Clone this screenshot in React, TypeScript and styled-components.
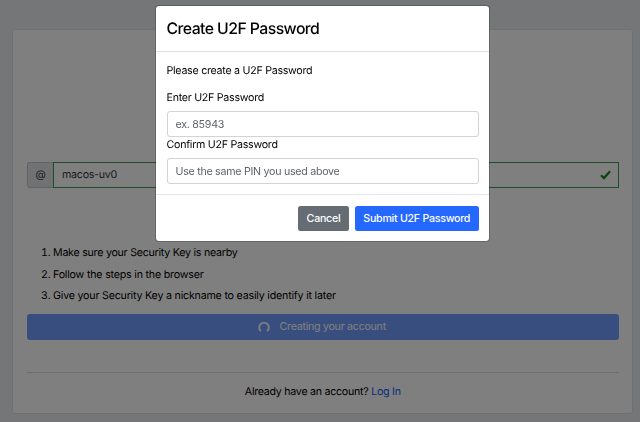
import React from 'react';
import styled, { createGlobalStyle } from 'styled-components';

const GlobalStyle = createGlobalStyle`
  * { box-sizing: border-box; }
  body {
    margin: 0;
    overflow: hidden;
    background: #e9ecef;
    color: #000;
    font: 400 10.67px/16px Inter, "Liberation Sans", sans-serif;
    letter-spacing: -0.27px;
    text-rendering: geometricPrecision;
  }
  input, button { font: inherit; letter-spacing: inherit; }
`;

const Page = styled.main`
  height: 422px;
  padding: 29px 7px 8px 12px;
`;

const Card = styled.section`
  display: flex;
  flex-direction: column;
  height: 385px;
  padding: 132px 13.5px 0 14px;
  background: #fff;
  border: 1px solid #dfe1e4;
  border-radius: 3px;
`;

const InputGroup = styled.div`
  display: flex;
  height: 26px;
`;

const Prefix = styled.span`
  display: grid;
  place-items: center;
  width: 26px;
  color: #343a40;
  background: #e1e4e8;
  border: 1px solid #c3c9cf;
  border-right: 0;
  border-radius: 3px 0 0 3px;
`;

const ValidField = styled.div`
  display: flex;
  flex: 1;
  align-items: center;
  justify-content: space-between;
  padding: 0 7px 0 8px;
  color: #34383c;
  letter-spacing: -0.26px;
  border: 1px solid #3f9b50;
`;

const Steps = styled.ol`
  display: flex;
  flex-direction: column;
  gap: 5.5px;
  margin: 57px 0 0;
  padding: 0 0 0 26px;
`;

const Step = styled.li<{ $tracking: number }>`
  letter-spacing: ${(p) => p.$tracking}px;
`;

const ProgressButton = styled.button`
  display: flex;
  align-items: center;
  justify-content: center;
  gap: 10px;
  height: 26px;
  margin-top: 10px;
  padding: 0 2px 0 0;
  color: #fff;
  background: #2468ff;
  border: 0;
  border-radius: 3px;
  opacity: 0.65;
`;

const Divider = styled.hr`
  width: 100%;
  height: 1px;
  margin: 32px 0 11px;
  border: 0;
  background: #dcdcdc;
`;

const LoginPrompt = styled.p`
  margin: 0;
  text-align: center;
`;

const Link = styled.a`
  color: #0d5cf5;
  text-decoration: none;
`;

const Backdrop = styled.div`
  position: fixed;
  inset: 0;
  display: flex;
  align-items: flex-start;
  padding: 5px 0 0 155px;
  background: rgba(0, 0, 0, 0.5);
`;

const Dialog = styled.div`
  width: 335px;
  height: 237px;
  background: #fff;
  background-clip: padding-box;
  border: 1px solid rgba(0, 0, 0, 0.2);
  border-radius: 4px;
`;

const DialogHeader = styled.header`
  height: 46px;
  padding: 12px 11px 0 10.5px;
  border-bottom: 1px solid #dee2e6;
`;

const Title = styled.h2`
  margin: 0;
  font-size: 15.8px;
  font-weight: 500;
  line-height: 22px;
  letter-spacing: -0.56px;
`;

const DialogBody = styled.div`
  display: flex;
  flex-direction: column;
  height: 142px;
  padding: 11px 11px 0 10.5px;
`;

const Intro = styled.p`
  margin: 0 0 11px;
`;

const Label = styled.label`
  margin-bottom: 5px;
`;

const Field = styled.input`
  width: 312px;
  height: 26px;
  padding: 0 8px;
  background: #fff;
  border: 1px solid #ced4da;
  border-radius: 3px;
  outline: 0;
  &::placeholder { color: #5b636b; opacity: 1; }
`;

const DialogFooter = styled.footer`
  display: flex;
  justify-content: flex-end;
  gap: 6px;
  padding: 11px 10.5px;
  border-top: 1px solid #e4e7ea;
`;

const ActionButton = styled.button<{ $color: string; $width: number }>`
  width: ${(p) => p.$width}px;
  height: 25px;
  padding: 0;
  color: #fff;
  font-weight: 500;
  background: ${(p) => p.$color};
  border: 0;
  border-radius: 2.5px;
`;

export default function App() {
  return (
    <>
      <GlobalStyle />
      <Page>
        <Card>
          <InputGroup>
            <Prefix>@</Prefix>
            <ValidField>
              macos-uv0
              <svg width="11" height="10" viewBox="0 0 11 10" fill="none" stroke="#138a1d" strokeWidth="2.2">
                <path d="M1 5.2 4 8.1 10 1.3" />
              </svg>
            </ValidField>
          </InputGroup>
          <Steps>
            <Step $tracking={-0.25}>Make sure your Security Key is nearby</Step>
            <Step $tracking={-0.2}>Follow the steps in the browser</Step>
            <Step $tracking={-0.2}>Give your Security Key a nickname to easily identify it later</Step>
          </Steps>
          <ProgressButton disabled>
            <svg width="12" height="12" viewBox="0 0 12 12" fill="none" stroke="#fff" strokeWidth="1.8">
              <path d="M2.9 10A4.8 4.8 0 1 1 9.1 10" />
            </svg>
            Creating your account
          </ProgressButton>
          <Divider />
          <LoginPrompt>
            Already have an account? <Link>Log In</Link>
          </LoginPrompt>
        </Card>
      </Page>
      <Backdrop>
        <Dialog role="dialog">
          <DialogHeader>
            <Title>Create U2F Password</Title>
          </DialogHeader>
          <DialogBody>
            <Intro>Please create a U2F Password</Intro>
            <Label htmlFor="pin">Enter U2F Password</Label>
            <Field id="pin" placeholder="ex. 85943" />
            <Label htmlFor="confirm">Confirm U2F Password</Label>
            <Field id="confirm" placeholder="Use the same PIN you used above" />
          </DialogBody>
          <DialogFooter>
            <ActionButton $color="#666c74" $width={51}>Cancel</ActionButton>
            <ActionButton $color="#2468ff" $width={123.5}>Submit U2F Password</ActionButton>
          </DialogFooter>
        </Dialog>
      </Backdrop>
    </>
  );
}
